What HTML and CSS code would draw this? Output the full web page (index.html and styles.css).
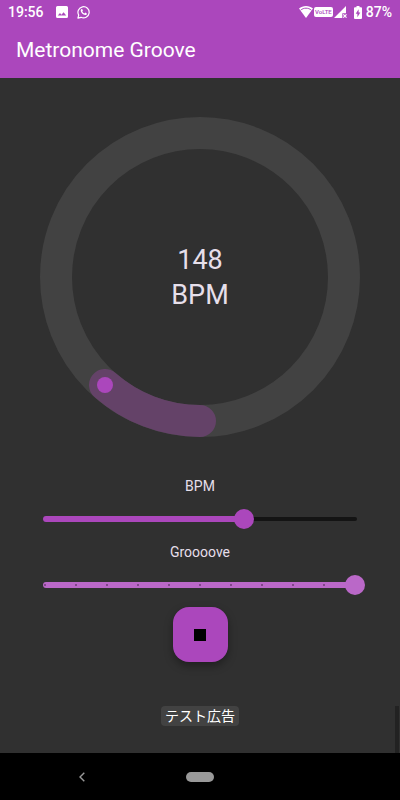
FILE: index.html
```html
<!DOCTYPE html>
<html lang="en">
<head>
    <meta charset="UTF-8">
    <meta name="viewport" content="width=device-width, initial-scale=1.0">
    <title>Metronome Groove</title>
    <link rel="stylesheet" href="styles.css">
</head>
<body>
    <header class="header">
        <div class="status-bar">
            <div class="status-left">
                <span class="clock">19:56</span>
                <svg class="icon-image" width="12" height="12" viewBox="0 0 12 12">
                    <path fill="#fff" fill-rule="evenodd" d="M1.5 0h9A1.5 1.5 0 0 1 12 1.5v9a1.5 1.5 0 0 1-1.5 1.5h-9A1.5 1.5 0 0 1 0 10.5v-9A1.5 1.5 0 0 1 1.5 0zM1.8 9.6h8.400L7.600 6.200 5.400 8.700 4 7z"/>
                </svg>
                <svg width="13" height="13" viewBox="0 0 13 13">
                    <path fill="none" stroke="#fff" stroke-width="1.2" stroke-linejoin="round" d="M.9 12.100l.8-3A5.600 5.600 0 1 1 4 11.300z"/>
                    <path fill="#fff" d="M4.300 3.200c.5-.4.900-.3 1.100.2l.5 1.100-.6.900c.5 1 1.200 1.600 2.200 2l.8-.8 1.500.8c.2.900-.6 1.700-1.600 1.700C6 9 3.800 6.700 3.700 4.600c0-.6.200-1 .6-1.400z"/>
                </svg>
            </div>
            <div class="status-right">
                <svg width="14" height="12" viewBox="0 0 14 12">
                    <path fill="#fff" d="M7 0c2.700 0 5.100.9 7 2.500L7 12 0 2.500C1.900.9 4.300 0 7 0z"/>
                    <path fill="none" stroke="#ab47bc" stroke-width="1" d="M1.600 4.200C4.700 1.500 9.300 1.500 12.400 4.200"/>
                </svg>
                <span class="volte">VoLTE</span>
                <svg width="13" height="12" viewBox="0 0 13 12">
                    <path fill="#fff" d="M12 0v7.200H8.300V12H0z"/>
                    <path fill="none" stroke="#fff" stroke-width="1.2" d="M9.300 8.300l3.200 3.300M12.500 8.300l-3.200 3.300"/>
                </svg>
                <svg class="icon-battery" width="8" height="13" viewBox="0 0 8 13">
                    <path fill="#fff" d="M2.500 0h3v1.200H7a1 1 0 0 1 1 1V12a1 1 0 0 1-1 1H1a1 1 0 0 1-1-1V2.200a1 1 0 0 1 1-1h1.500z"/>
                    <path fill="#ab47bc" d="M4.600 3.300L1.700 7.800h1.700v3.400l2.900-4.600H4.600z"/>
                </svg>
                <span class="battery-level">87%</span>
            </div>
        </div>
        <h1 class="title">Metronome Groove</h1>
    </header>

    <main class="main">
        <div class="dial">
            <svg class="dial-ring" viewBox="0 0 320 320">
                <circle class="ring-track" cx="160" cy="160" r="144"/>
                <path class="ring-progress" d="M160 304A144 144 0 0 1 65 268"/>
                <circle class="ring-dot" cx="65" cy="268" r="8"/>
            </svg>
            <div class="dial-text">148<br>BPM</div>
        </div>

        <div class="controls">
            <label class="label" for="bpm">BPM</label>
            <div class="slider">
                <div class="rail"><div class="fill" style="width: 64%"></div></div>
                <input type="range" id="bpm" min="40" max="208" value="148">
            </div>
            <label class="label" for="groove">Groooove</label>
            <div class="slider slider-groove">
                <div class="rail"><div class="fill" style="width: 100%"></div></div>
                <div class="ticks">
                    <i></i><i></i><i></i><i></i><i></i><i></i><i></i><i></i><i></i><i></i><i></i>
                </div>
                <input type="range" id="groove" min="0" max="10" value="10">
            </div>
        </div>

        <button class="stop" type="button" aria-label="Stop">
            <svg width="12" height="12" viewBox="0 0 12 12"><path d="M0 0h12v12H0z"/></svg>
        </button>

        <div class="ad" lang="ja">テスト広告</div>
        <div class="scrollbar"></div>
    </main>

    <nav class="nav-bar">
        <button class="nav-back" type="button" aria-label="Back">
            <svg width="6" height="10" viewBox="0 0 6 10"><path fill="none" stroke="#999" stroke-width="1.4" d="M5.300.7L1 5l4.300 4.300"/></svg>
        </button>
        <button class="nav-home" type="button" aria-label="Home"></button>
        <span></span>
    </nav>
</body>
</html>
```
FILE: styles.css
```css
* {
    box-sizing: border-box;
}
body {
    margin: 0;
    min-height: 100vh;
    display: flex;
    flex-direction: column;
    font-family: Roboto, "Noto Sans CJK JP", sans-serif;
    background-color: #303030;
    color: #e6dfea;
}
svg {
    display: block;
}
button {
    padding: 0;
    border: none;
    cursor: pointer;
}

/* header */
.header {
    background-color: #ab47bc;
    color: white;
}
.status-bar {
    display: flex;
    justify-content: space-between;
    height: 24px;
    padding: 0 8px;
    font-size: 14px;
    font-weight: 500;
}
.status-left,
.status-right {
    display: flex;
    align-items: center;
}
.icon-image {
    margin: 0 9px 0 12px;
}
.volte {
    padding: 0 1px;
    margin: 0 1px;
    border-radius: 2px;
    background: white;
    color: #ab47bc;
    font-size: 6px;
    line-height: 10px;
}
.icon-battery {
    margin: 0 4px 0 7px;
}
.title {
    margin: 0;
    padding: 0 16px;
    font-size: 21px;
    font-weight: 400;
    line-height: 52px;
    padding-bottom: 2px;
}

/* content */
.main {
    position: relative;
    flex: 1;
    display: flex;
    flex-direction: column;
    align-items: center;
    padding: 39px 35px 27px;
}
.dial {
    display: grid;
    place-items: center;
    width: 100%;
    max-width: 320px;
}
.dial-ring,
.dial-text {
    grid-area: 1 / 1;
}
.dial-ring {
    width: 100%;
}
.ring-track {
    fill: none;
    stroke: #424242;
    stroke-width: 32;
}
.ring-progress {
    fill: none;
    stroke: #644268;
    stroke-width: 32;
    stroke-linecap: round;
}
.ring-dot {
    fill: #ab47bc;
}
.dial-text {
    padding-top: 2px;
    font-size: 27px;
    line-height: 35px;
    text-align: center;
}
.controls {
    display: flex;
    flex-direction: column;
    width: 100%;
    margin-top: 38px;
}
.label {
    font-size: 14px;
    line-height: 22px;
    text-align: center;
}
.slider {
    display: grid;
    align-items: center;
    height: 44px;
}
.rail,
.ticks,
.slider input {
    grid-area: 1 / 1;
}
.rail {
    display: flex;
    align-items: center;
    height: 4px;
    margin: 0 8px;
    border-radius: 2px;
    background: #141414;
}
.fill {
    height: 6px;
    border-radius: 3px;
    background: #ab47bc;
}
.ticks {
    display: flex;
    justify-content: space-between;
    margin: 0 9px;
    z-index: 1;
}
.ticks i {
    width: 2px;
    height: 2px;
    border-radius: 1px;
    background: #6d3d76;
}
.slider input {
    appearance: none;
    z-index: 2;
    width: 100%;
    height: 20px;
    margin: 0;
    background: none;
}
.slider input::-webkit-slider-thumb {
    appearance: none;
    width: 20px;
    height: 20px;
    border-radius: 50%;
    background: #ab47bc;
}
.slider-groove .fill,
.slider-groove input::-webkit-slider-thumb {
    background: #ba68c8;
}
.stop {
    display: grid;
    place-items: center;
    width: 55px;
    height: 55px;
    border-radius: 16px;
    background: #ab47bc;
    box-shadow: 0 4px 8px rgba(0, 0, 0, 0.35);
}
.ad {
    margin-top: auto;
    padding: 0 4px;
    border-radius: 4px;
    background: #424242;
    color: white;
    font-size: 14px;
    line-height: 20px;
}
.scrollbar {
    position: absolute;
    right: 1px;
    bottom: 0;
    width: 4px;
    height: 47px;
    background: #222;
}

/* bottom navigation */
.nav-bar {
    display: grid;
    grid-template-columns: 1fr auto 1fr;
    column-gap: 22px;
    align-items: center;
    height: 47px;
    background: black;
}
.nav-back {
    justify-self: center;
    padding: 8px;
    background: none;
}
.nav-home {
    width: 28px;
    height: 10px;
    border-radius: 5px;
    background: #999;
}
```
